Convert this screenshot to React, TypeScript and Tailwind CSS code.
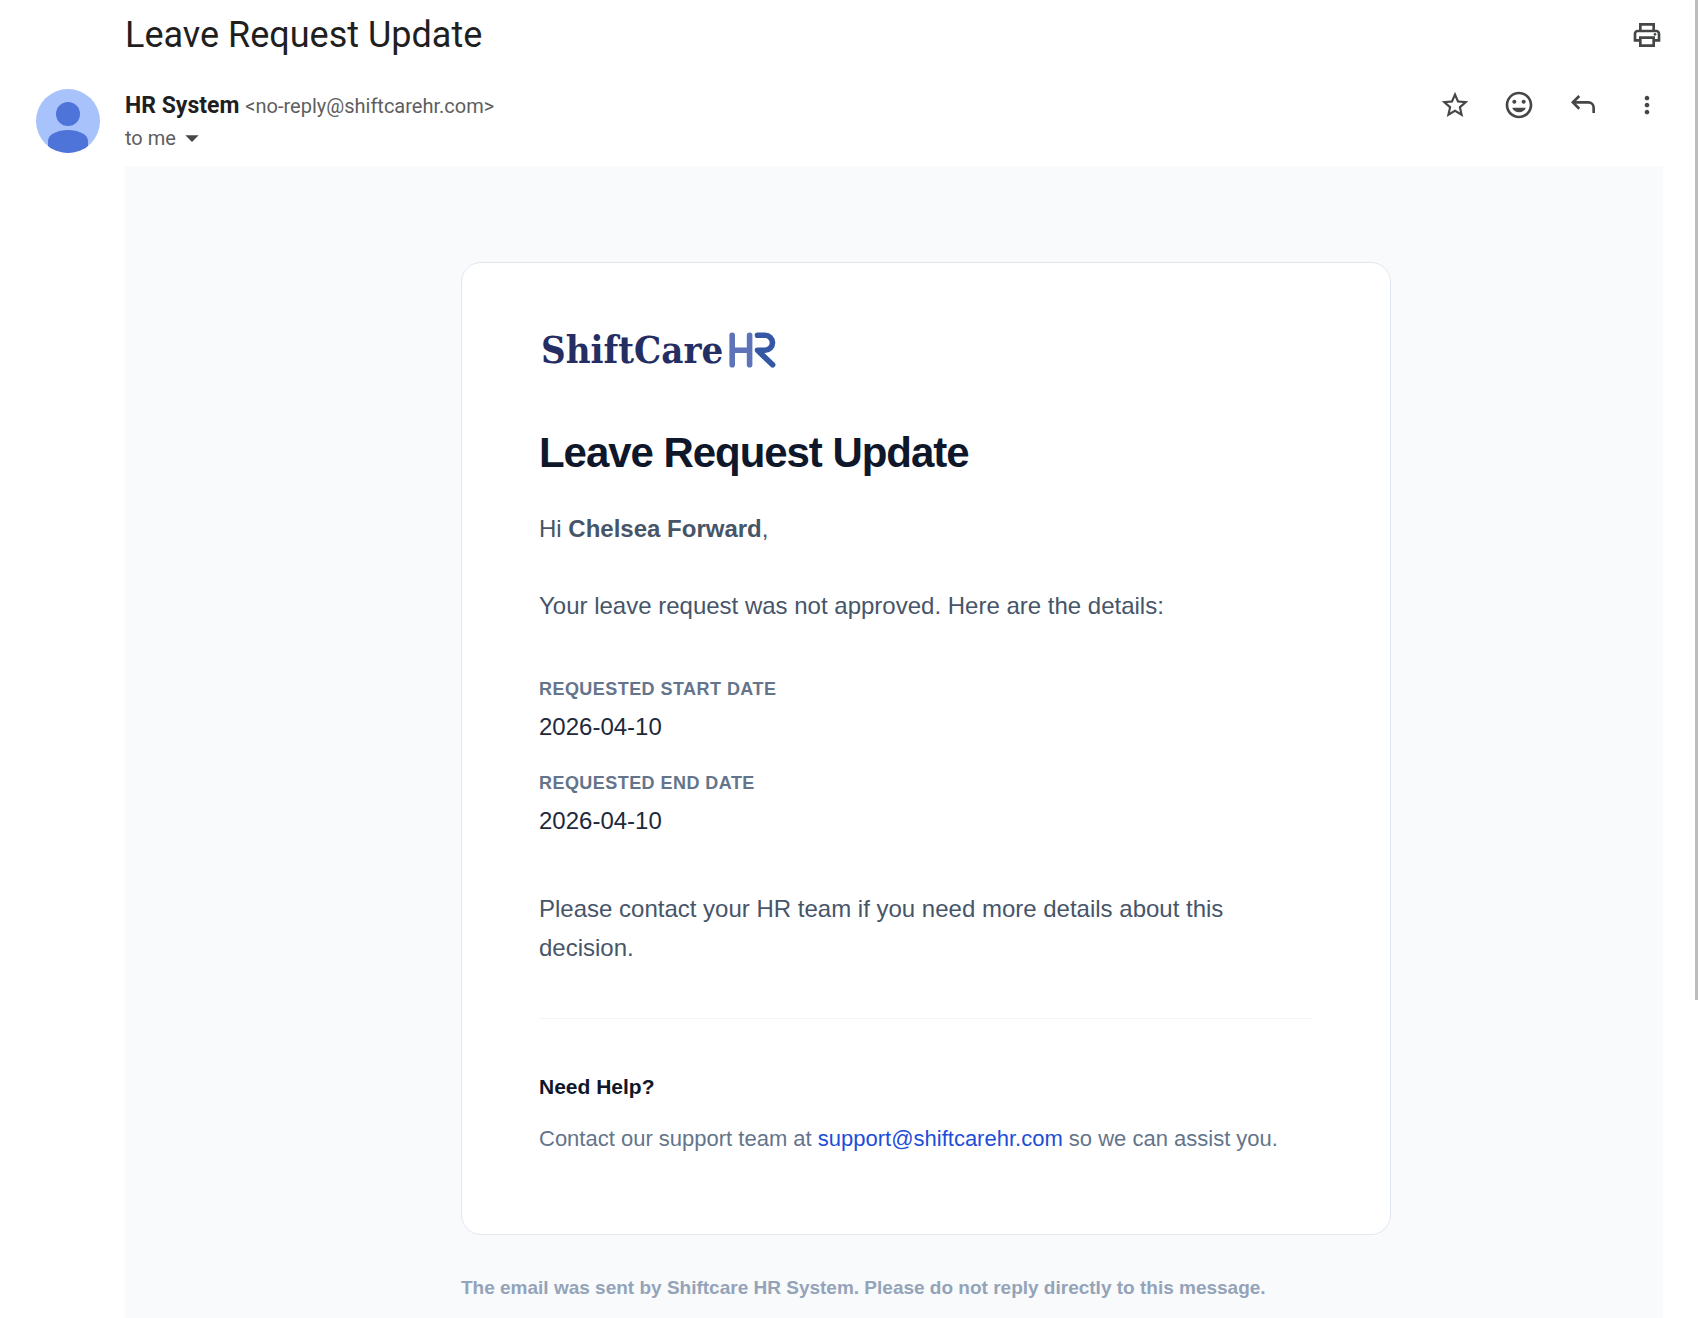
import React from 'react';
import { MdInsertEmoticon, MdMoreVert, MdOutlinePrint, MdStarBorder, MdArrowDropDown } from 'react-icons/md';

const DETAILS = [
  { label: 'Requested start date', value: '2026-04-10' },
  { label: 'Requested end date', value: '2026-04-10' },
];

const ReplyIcon: React.FC = () => (
  <svg viewBox="0 0 24 24" className="size-8" fill="none" stroke="currentColor" strokeWidth="2" aria-hidden="true">
    <path d="M9.2 5.2 4.4 10l4.8 4.8" />
    <path d="M4.4 10H16a4 4 0 0 1 4 4v4" />
  </svg>
);

const IconButton: React.FC<{ label: string; children: React.ReactNode }> = ({ label, children }) => (
  <button type="button" aria-label={label} className="flex size-8 items-center justify-center text-[#444746]">
    {children}
  </button>
);

const Avatar: React.FC = () => (
  <svg viewBox="0 0 64 64" className="size-16 shrink-0" role="img" aria-label="HR System">
    <defs>
      <clipPath id="avatar-clip">
        <circle cx="32" cy="32" r="32" />
      </clipPath>
    </defs>
    <g clipPath="url(#avatar-clip)">
      <rect width="64" height="64" fill="#a8c2fb" />
      <circle cx="32" cy="25" r="12" fill="#4e73d9" />
      <path d="M12 64V52c0-7 10-11 20-11s20 4 20 11v12z" fill="#4e73d9" />
    </g>
  </svg>
);

const Logo: React.FC = () => (
  <div className="flex h-10 items-center gap-[5px] px-[2px]">
    <span className="font-['DejaVu_Serif_Condensed','DejaVu_Serif',serif] text-[38px] leading-10 font-bold text-[#252e63]">
      ShiftCare
    </span>
    <svg viewBox="0 0 48 36" className="h-9 w-12" fill="none" strokeLinecap="round" strokeWidth="5.6" role="img" aria-label="HR">
      <path d="M4.2 3.2v29.6M21.6 3.2v29.6M4.2 18.3h17.4" stroke="#5f74b8" />
      <path d="M29.5 3.3H37a7.5 7.5 0 0 1 0 15h-7.5L44.6 32.8" stroke="#3558a5" strokeLinejoin="round" />
    </svg>
  </div>
);

const App: React.FC = () => {
  return (
    <div className="flex min-h-screen bg-white font-['Liberation_Sans',Arial,sans-serif]">
      <main className="flex min-w-0 flex-1 flex-col pr-8 pl-9">
        <header className="flex h-[70px] items-center justify-between pl-[89px]">
          <h1 className="font-[Roboto,sans-serif] text-[36px] leading-10 text-[#1f1f1f]">Leave Request Update</h1>
          <IconButton label="Print all">
            <MdOutlinePrint className="size-8" />
          </IconButton>
        </header>

        <section className="flex h-24 items-start pt-[19px]">
          <Avatar />
          <div className="ml-[25px] flex-1 font-[Roboto,sans-serif]">
            <p className="leading-[34px]">
              <span className="mr-0.5 text-[23px] font-bold text-[#1f1f1f]">HR System</span>{' '}
              <span className="text-[20px] text-[#5e5e5e]">&lt;no-reply@shiftcarehr.com&gt;</span>
            </p>
            <button type="button" className="flex h-[26px] items-center text-[20px] leading-[26px] text-[#5e5e5e]">
              to me
              <MdArrowDropDown className="size-8 text-[#444746]" />
            </button>
          </div>
          <div className="flex gap-8">
            <IconButton label="Star"><MdStarBorder className="size-8" /></IconButton>
            <IconButton label="Add reaction"><MdInsertEmoticon className="size-8" /></IconButton>
            <IconButton label="Reply"><ReplyIcon /></IconButton>
            <IconButton label="More"><MdMoreVert className="size-7" /></IconButton>
          </div>
        </section>

        {/* message body */}
        <div className="ml-[89px] flex-1 bg-[#f8fafc] pt-24 pr-16 pl-32">
          <div className="mx-auto w-full max-w-[930px]">
            <article className="rounded-[20px] border border-[#e2e8f0] bg-white px-[77px] pt-[67px] pb-[77px]">
              <Logo />
              <h2 className="mt-14 text-[42px] leading-[54px] font-bold tracking-tight text-[#0f172a]">Leave Request Update</h2>
              <div className="mt-[29px] text-[24px] leading-[39px] text-[#475569]">
                <p>Hi <strong>Chelsea Forward</strong>,</p>
                <p className="mt-[38px]">Your leave request was not approved. Here are the details:</p>
              </div>
              <dl className="mt-[46px]">
                {DETAILS.map(({ label, value }) => (
                  <div key={label} className="mb-[19px]">
                    <dt className="text-[18px] leading-9 font-bold tracking-wide text-[#64748b] uppercase">{label}</dt>
                    <dd className="text-[24px] leading-[39px] text-[#1e293b]">{value}</dd>
                  </div>
                ))}
              </dl>
              <p className="mt-[49px] text-[24px] leading-[39px] text-[#475569]">
                Please contact your HR team if you need more details about this decision.
              </p>
              <footer className="mt-[51px] border-t border-[#f1f5f9] pt-[50px]">
                <h3 className="text-[21px] leading-9 font-bold text-[#0f172a]">Need Help?</h3>
                <p className="mt-4 text-[22px] leading-9 text-[#64748b]">
                  Contact our support team at{' '}
                  <a href="mailto:support@shiftcarehr.com" className="text-[#1d4ed8]">support@shiftcarehr.com</a>{' '}
                  so we can assist you.
                </p>
              </footer>
            </article>
            <p className="pt-[38px] pb-2 text-[19px] leading-[30px] font-bold text-[#94a3b8]">
              The email was sent by Shiftcare HR System. Please do not reply directly to this message.
            </p>
          </div>
        </div>
      </main>
      <div className="h-[1000px] w-[3px] bg-[#bdbdbd]" />
    </div>
  );
};

export default App;
